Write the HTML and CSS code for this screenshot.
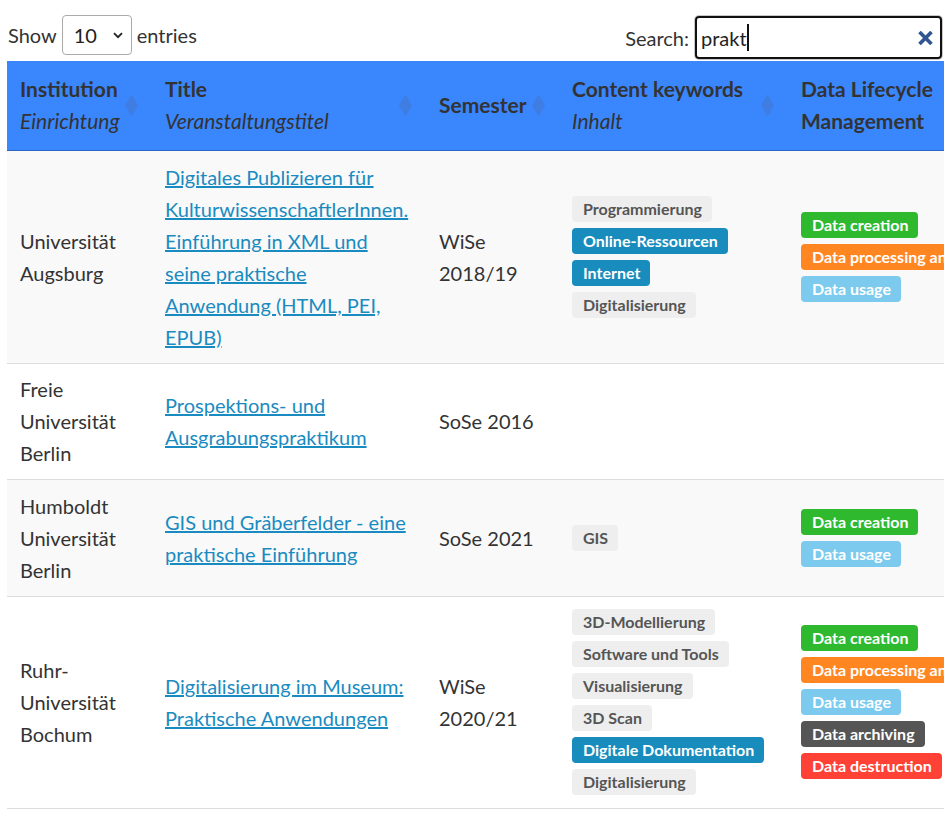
FILE: index.html
```html
<!DOCTYPE html>
<html lang="de">
<head>
<meta charset="utf-8">
<title>Courses</title>
<link rel="stylesheet" href="styles.css">
</head>
<body>
<div class="wrap">
  <div class="topbar">
    <div class="length">
      <span>Show</span>
      <div class="select"><span>10</span>
        <svg class="chev" width="10" height="7" viewBox="0 0 10 7"><path d="M1 1.2 L5 5.2 L9 1.2" fill="none" stroke="#222" stroke-width="1.8"/></svg>
      </div>
      <span>entries</span>
    </div>
    <div class="filter">
      <span>Search:</span>
      <div class="search"><span class="q">prakt</span><span class="caret"></span>
        <svg class="clear" width="15" height="14" viewBox="0 0 15 14"><path d="M1.5 1 L13.5 13 M13.5 1 L1.5 13" stroke="#2f5690" stroke-width="3.6" stroke-linecap="butt"/></svg>
      </div>
    </div>
  </div>
  <div class="scroller">
    <table class="tbl">
      <colgroup>
        <col class="c1"><col class="c2"><col class="c3"><col class="c4"><col class="c5">
      </colgroup>
      <thead>
        <tr>
          <th class="sort"><b>Institution</b><br><i>Einrichtung</i></th>
          <th class="sort"><b>Title</b><br><i>Veranstaltungstitel</i></th>
          <th class="sort"><b>Semester</b></th>
          <th class="sort"><b>Content keywords</b><br><i>Inhalt</i></th>
          <th><b>Data Lifecycle Management</b></th>
        </tr>
      </thead>
      <tbody>
        <tr class="odd">
          <td>Universität Augsburg</td>
          <td><a href="#">Digitales Publizieren für KulturwissenschaftlerInnen. Einführung in XML und seine praktische Anwendung (HTML, PEI, EPUB)</a></td>
          <td>WiSe 2018/19</td>
          <td><div class="tags"><span class="tag gray">Programmierung</span><span class="tag blue">Online-Ressourcen</span><span class="tag blue">Internet</span><span class="tag gray">Digitalisierung</span></div></td>
          <td><div class="tags"><span class="tag green">Data creation</span><span class="tag orange">Data processing and analysis</span><span class="tag sky">Data usage</span></div></td>
        </tr>
        <tr>
          <td>Freie Universität Berlin</td>
          <td><a href="#">Prospektions- und Ausgrabungspraktikum</a></td>
          <td>SoSe 2016</td>
          <td></td>
          <td></td>
        </tr>
        <tr class="odd">
          <td>Humboldt Universität Berlin</td>
          <td><a href="#">GIS und Gräberfelder - eine praktische Einführung</a></td>
          <td>SoSe 2021</td>
          <td><div class="tags"><span class="tag gray">GIS</span></div></td>
          <td><div class="tags"><span class="tag green">Data creation</span><span class="tag sky">Data usage</span></div></td>
        </tr>
        <tr>
          <td>Ruhr-Universität Bochum</td>
          <td><a href="#">Digitalisierung im Museum: Praktische Anwendungen</a></td>
          <td>WiSe 2020/21</td>
          <td><div class="tags"><span class="tag gray">3D-Modellierung</span><span class="tag gray">Software und Tools</span><span class="tag gray">Visualisierung</span><span class="tag gray">3D Scan</span><span class="tag blue">Digitale Dokumentation</span><span class="tag gray">Digitalisierung</span></div></td>
          <td><div class="tags"><span class="tag green">Data creation</span><span class="tag orange">Data processing and analysis</span><span class="tag sky">Data usage</span><span class="tag dark">Data archiving</span><span class="tag red">Data destruction</span></div></td>
        </tr>
      </tbody>
    </table>
  </div>
</div>
</body>
</html>
```
FILE: styles.css
```css
html, body {
  margin: 0;
  padding: 0;
  background: #fff;
}
body {
  font-family: "Lato", "Source Sans Pro", "Liberation Sans", sans-serif;
  font-size: 20px;
  line-height: 32px;
  color: #333;
}
.wrap {
  margin: 0 7px;
  padding-top: 15px;
}
.topbar {
  display: flex;
  justify-content: space-between;
  align-items: flex-start;
  height: 44px;
  margin-bottom: 2px;
}
.length {
  display: flex;
  align-items: center;
  gap: 5px;
  height: 40px;
  padding-left: 1px;
}
.select {
  position: relative;
  box-sizing: border-box;
  width: 70px;
  height: 40px;
  border: 1px solid #aaa;
  border-radius: 4px;
  padding-left: 11px;
  display: flex;
  align-items: center;
  color: #222;
}
.chev {
  position: absolute;
  right: 8px;
  top: 16px;
}
.filter {
  display: flex;
  align-items: center;
  gap: 6px;
  margin-top: 1px;
  margin-right: 2px;
}
.search {
  position: relative;
  box-sizing: border-box;
  width: 247px;
  height: 43px;
  border: 2px solid #111;
  border-radius: 4px;
  box-shadow: 0 0 0 1px #c8c8c8;
  padding-left: 4px;
  display: flex;
  align-items: center;
  color: #222;
}
.caret {
  display: inline-block;
  width: 2px;
  height: 27px;
  background: #111;
}
.clear {
  position: absolute;
  right: 7px;
  top: 13px;
}
.scroller {
  overflow: hidden;
  width: 937px;
}
.tbl {
  border-collapse: collapse;
  table-layout: fixed;
  width: 1030px;
}
.c1 { width: 145px; }
.c2 { width: 274px; }
.c3 { width: 133px; }
.c4 { width: 229px; }
.c5 { width: 249px; }
.tbl th {
  position: relative;
  background: #3a86fd;
  text-align: left;
  vertical-align: middle;
  padding: 12px 13px 13px;
  border-bottom: 1px solid #2c66c4;
  color: #333;
  font-weight: normal;
  font-size: 21px;
  white-space: nowrap;
}
.tbl th:last-child { white-space: normal; }
.tbl th b { font-weight: 700; }
.tbl th i { font-style: italic; }
.tbl th.sort::after {
  content: "";
  position: absolute;
  right: 14px;
  top: 50%;
  width: 13px;
  height: 22px;
  margin-top: -11px;
  background: #3f7de2;
  clip-path: polygon(50% 0, 100% 50%, 50% 100%, 0 50%);
}
.tbl td {
  vertical-align: middle;
  padding: 9.5px 10px 10px 13px;
  border-top: 1px solid #ddd;
}
.tbl tbody tr:last-child td {
  border-bottom: 1px solid #ddd;
}
.tbl tr.odd td {
  background: #f9f9f9;
}
.tbl a {
  color: #1a8bc0;
  text-decoration: underline;
}
.tags {
  display: flex;
  flex-direction: column;
  align-items: flex-start;
  gap: 6px;
  padding: 3px 0;
}
.tag {
  display: block;
  height: 26px;
  line-height: 26px;
  padding: 0 10px 0 11px;
  border-radius: 4px;
  font-size: 16px;
  font-weight: 700;
  white-space: nowrap;
  color: #fff;
}
.tag.gray { background: #eeeeee; color: #555; }
.tag.blue { background: #178cbd; }
.tag.green { background: #2eb92e; }
.tag.orange { background: #ff8620; }
.tag.sky { background: #7ccaee; }
.tag.dark { background: #555555; }
.tag.red { background: #ff4136; }
```
